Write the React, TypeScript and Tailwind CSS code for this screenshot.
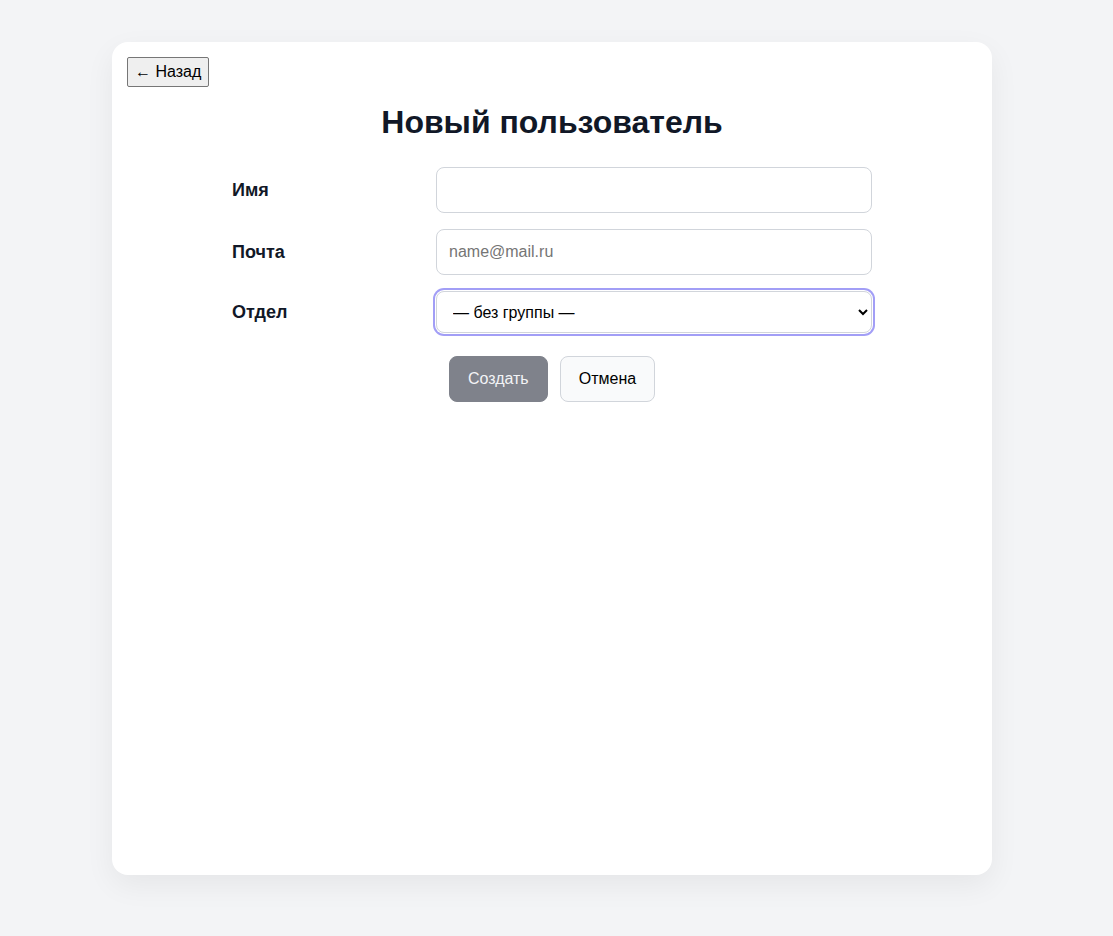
import React from "react";

export default function App() {
  return (
    <div
      className="min-h-screen bg-[#f3f4f6] pt-[42px] pb-[61px]"
      style={{ fontFamily: '"Liberation Sans", Arial, sans-serif' }}
    >
      <div className="ml-[112px] w-[880px] h-[833px] bg-white rounded-2xl shadow-[0_10px_30px_rgba(0,0,0,0.06)] pt-[15px] px-[15px]">
        <button className="h-[30px] px-[7px] text-[16px] text-black bg-[#efefef] border border-[#767676] rounded-[2px] leading-none">
          ← Назад
        </button>
        <h1 className="mt-[16px] text-center text-[32px] leading-[38px] font-bold text-[#111827]">
          Новый пользователь
        </h1>
        <div className="mx-auto w-[640px] mt-[26px] grid grid-cols-[180px_1fr] gap-x-6 gap-y-4 items-center">
          <label className="text-[18px] font-bold text-[#111827]">Имя</label>
          <input
            className="h-[46px] w-full rounded-lg border border-[#d1d5db] px-3 text-[16px] text-black outline-none"
            type="text"
          />
          <label className="text-[18px] font-bold text-[#111827]">Почта</label>
          <input
            className="h-[46px] w-full rounded-lg border border-[#d1d5db] px-3 text-[16px] text-black placeholder:text-[#757575] outline-none"
            type="email"
            placeholder="name@mail.ru"
          />
          <label className="text-[18px] font-bold text-[#111827]">Отдел</label>
          <select
            className="h-[42px] w-full rounded-lg border border-[#d1d5db] bg-white px-3 text-[16px] text-black outline-none ring-2 ring-[#a29ef6] ring-offset-1"
            defaultValue=""
          >
            <option value="">— без группы —</option>
          </select>
        </div>
        <div className="mt-[23px] flex justify-center gap-3">
          <button className="h-[46px] px-[18px] rounded-lg bg-[#7f828b] border border-[#7f828b] text-[16px] text-[#f3f4f6]">
            Создать
          </button>
          <button className="h-[46px] px-[18px] rounded-lg bg-[#f9fafb] border border-[#d1d5db] text-[16px] text-black">
            Отмена
          </button>
        </div>
      </div>
    </div>
  );
}
